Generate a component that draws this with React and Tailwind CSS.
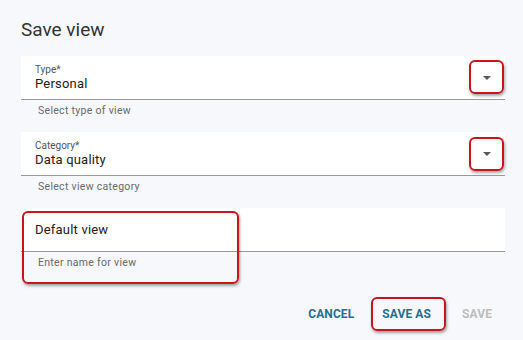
import React from "react";

function Arrow() {
  return (
    <svg width="8" height="4" viewBox="0 0 8 4" className="shrink-0">
      <path d="M0 0 L8 0 L4 4 Z" fill="#575757" />
    </svg>
  );
}

function SelectField({ label, value, helper }) {
  return (
    <div className="flex flex-col">
      <div className="flex h-[44px] items-center justify-between border-b border-[#9a9a9a] bg-white pl-[14px] pr-[14px]">
        <div className="flex flex-col">
          <span className="text-[10px] leading-[12px] text-[#555]">{label}</span>
          <span className="text-[13px] leading-[16px] tracking-[0.2px] text-[#222]">{value}</span>
        </div>
        <Arrow />
      </div>
      <div className="mt-[5px] h-[12px] pl-[17px] text-[10.5px] leading-[12px] tracking-[0.3px] text-[#6a6a6a]">{helper}</div>
    </div>
  );
}

function Mark({ className }) {
  return (
    <div
      className={
        "pointer-events-none absolute rounded-[6px] border-[2.5px] border-[#c8141a] shadow-[1px_2px_3px_rgba(0,0,0,0.35)] " +
        className
      }
    />
  );
}

export default function App() {
  return (
    <div
      className="relative h-[340px] w-[523px] overflow-hidden bg-[#f7f8fb] pl-[21px] pr-[18px] pt-[18px]"
      style={{ fontFamily: "Roboto, 'Liberation Sans', sans-serif" }}
    >
      <h1 className="h-[24px] text-[19px] leading-[24px] text-[#333]">Save view</h1>
      <div className="mt-[14px] flex flex-col gap-[15px]">
        <SelectField label="Type*" value="Personal" helper="Select type of view" />
        <SelectField label="Category*" value="Data quality" helper="Select view category" />
        <div className="flex flex-col">
          <div className="flex h-[44px] items-center border-b border-[#9a9a9a] bg-white pl-[14px]">
            <span className="text-[13px] leading-[16px] tracking-[0.2px] text-[#222]">Default view</span>
          </div>
          <div className="mt-[5px] h-[12px] pl-[17px] text-[10.5px] leading-[12px] tracking-[0.3px] text-[#6a6a6a]">
            Enter name for view
          </div>
        </div>
      </div>
      <div className="mt-[28px] mr-[-1px] flex justify-end gap-[3px]">
        <button className="h-[34px] pl-[14px] pr-[11px] text-[12px] font-bold tracking-[0.1px] text-[#266e90]">CANCEL</button>
        <button className="h-[34px] px-[14px] text-[12px] font-bold tracking-[0.1px] text-[#266e90]">SAVE AS</button>
        <button className="h-[34px] px-[14px] text-[12px] font-bold tracking-[0.1px] text-[#bdbdbd]">SAVE</button>
      </div>

      <Mark className="left-[469px] top-[60px] h-[34px] w-[35px]" />
      <Mark className="left-[469px] top-[137px] h-[34px] w-[35px]" />
      <Mark className="left-[22px] top-[211px] h-[73px] w-[217px]" />
      <Mark className="left-[371px] top-[297px] h-[34px] w-[75px]" />
    </div>
  );
}
